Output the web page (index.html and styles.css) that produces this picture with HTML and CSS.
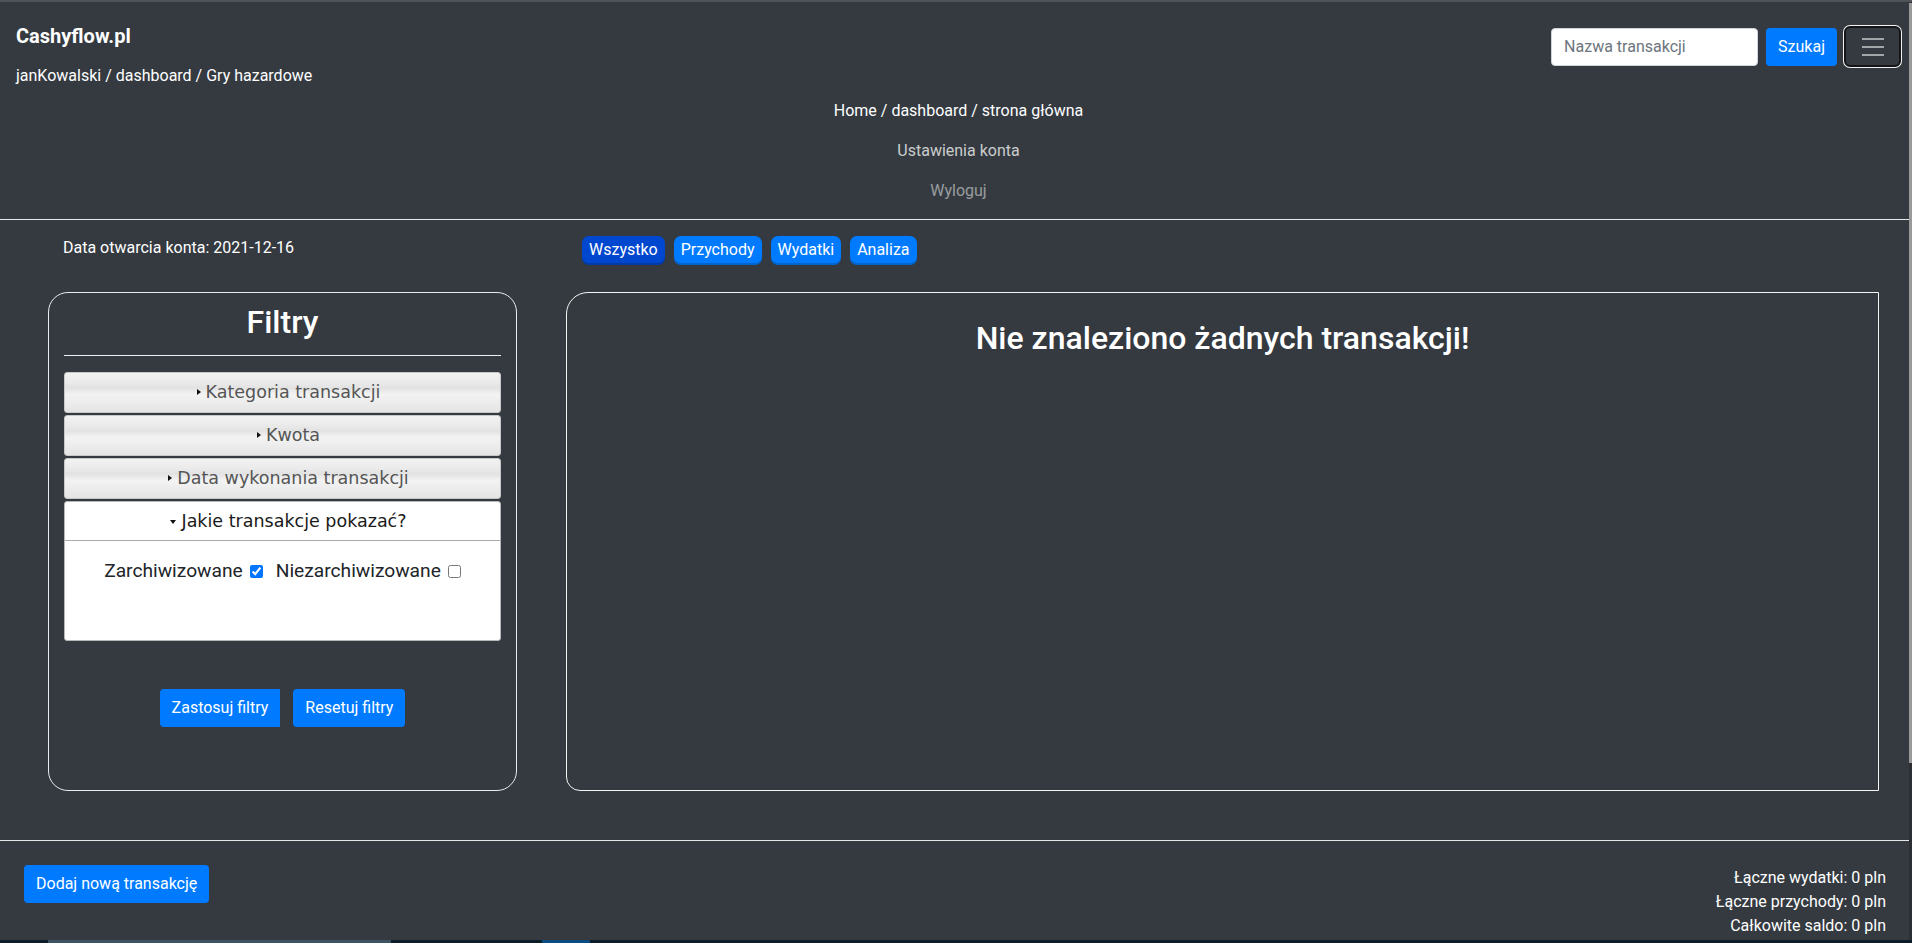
FILE: index.html
```html
<!DOCTYPE html>
<html lang="pl">
<head>
<meta charset="utf-8">
<title>Cashyflow.pl</title>
<link rel="stylesheet" href="styles.css">
</head>
<body>
<div class="topline"></div>
<header class="navbar">
  <div class="nav-top">
    <div class="brand-col">
      <a class="brand" href="#">Cashyflow.pl</a>
      <div class="crumb">janKowalski / dashboard / Gry hazardowe</div>
    </div>
    <div class="nav-right">
      <form class="search">
        <input class="search-input" type="text" placeholder="Nazwa transakcji">
        <button class="btn btn-primary" type="button">Szukaj</button>
      </form>
      <button class="toggler" type="button" aria-label="Menu">
        <svg width="30" height="30" viewBox="0 0 30 30"><path d="M4 7h22M4 15h22M4 23h22" stroke="rgba(255,255,255,0.55)" stroke-width="2" stroke-linecap="butt" fill="none"/></svg>
      </button>
    </div>
  </div>
  <ul class="nav-list">
    <li class="nav-item active">Home / dashboard / strona główna</li>
    <li class="nav-item hover">Ustawienia konta</li>
    <li class="nav-item">Wyloguj</li>
  </ul>
</header>
<div class="rule"></div>
<main class="content">
  <div class="info">Data otwarcia konta: 2021-12-16</div>
  <div class="tabs">
    <button class="tab tab-active" type="button">Wszystko</button>
    <button class="tab" type="button">Przychody</button>
    <button class="tab" type="button">Wydatki</button>
    <button class="tab" type="button">Analiza</button>
  </div>
  <section class="filters">
    <h2 class="filters-title">Filtry</h2>
    <div class="filters-rule"></div>
    <div class="acc">
      <div class="acc-item"><div class="acc-head"><span class="tri"></span>Kategoria transakcji</div></div>
      <div class="acc-item"><div class="acc-head"><span class="tri"></span>Kwota</div></div>
      <div class="acc-item"><div class="acc-head"><span class="tri"></span>Data wykonania transakcji</div></div>
      <div class="acc-item acc-open">
        <div class="acc-head"><span class="tri tri-down"></span>Jakie transakcje pokazać?</div>
        <div class="acc-body">
          <label class="check">Zarchiwizowane <input type="checkbox" checked></label>
          <label class="check">Niezarchiwizowane <input type="checkbox"></label>
        </div>
      </div>
    </div>
    <div class="filter-actions">
      <button class="btn btn-primary btn-apply" type="button">Zastosuj filtry</button>
      <button class="btn btn-primary" type="button">Resetuj filtry</button>
    </div>
  </section>
  <section class="results">
    <h2 class="results-title">Nie znaleziono żadnych transakcji!</h2>
  </section>
</main>
<div class="rule rule-bottom"></div>
<footer class="footer">
  <button class="btn btn-primary" type="button">Dodaj nową transakcję</button>
  <div class="totals">
    <div>Łączne wydatki: 0 pln</div>
    <div>Łączne przychody: 0 pln</div>
    <div>Całkowite saldo: 0 pln</div>
  </div>
</footer>
<div class="taskbar"><span class="tb-a"></span><span class="tb-b"></span></div>
<div class="scrollbar"><span class="thumb"></span></div>
</body>
</html>
```

FILE: styles.css
```css
* { box-sizing: border-box; }

html, body {
  margin: 0;
  padding: 0;
  background: #343a40;
}

body {
  font-family: Roboto, "Noto Sans", "Liberation Sans", sans-serif;
  font-size: 16px;
  line-height: 24px;
  color: #fff;
  min-height: 1000px;
}

.topline {
  height: 2px;
  background: #505459;
}

.navbar {
  padding: 19px 11px 8px 16px;
}

.nav-top {
  display: flex;
  justify-content: space-between;
  align-items: flex-start;
}

.brand-col {
  display: flex;
  flex-direction: column;
}

.brand {
  font-size: 20px;
  line-height: 30px;
  font-weight: 700;
  color: #fff;
  text-decoration: none;
}

.crumb {
  margin-top: 13px;
  line-height: 24px;
}

.nav-right {
  display: flex;
  align-items: center;
  margin-top: 5px;
  gap: 7px;
}

.search {
  display: flex;
  gap: 8px;
  margin: 0;
}

.search-input {
  width: 207px;
  height: 38px;
  padding: 6px 12px;
  border: 1px solid #ced4da;
  border-radius: 4px;
  font: inherit;
  font-size: 16px;
  color: #495057;
  background: #fff;
}

.search-input::placeholder {
  color: #6c757d;
}

.btn {
  font-family: inherit;
  font-size: 16px;
  line-height: 24px;
  padding: 7px 12px;
  border: 0;
  border-radius: 4px;
  cursor: pointer;
}

.btn-primary {
  background: #007bff;
  color: #fff;
}

.toggler {
  width: 57px;
  height: 41px;
  padding: 0;
  display: flex;
  align-items: center;
  justify-content: center;
  background: #343a40;
  border: 2px solid #141516;
  border-radius: 6px;
  box-shadow: 0 0 0 1px #f2f2f2;
}

.toggler svg {
  display: block;
}

.nav-list {
  list-style: none;
  margin: 3px 0 0;
  padding: 0;
  text-align: center;
}

.nav-item {
  padding: 8px 0;
  line-height: 24px;
  color: rgba(255, 255, 255, 0.5);
  margin-left: -11px;
  margin-right: -11px;
}

.nav-item.active {
  color: #fff;
}

.nav-item.hover {
  color: rgba(255, 255, 255, 0.75);
}

.rule {
  height: 1px;
  background: #e8e8e8;
}

.content {
  display: grid;
  grid-template-columns: 469px 1313px;
  column-gap: 49px;
  row-gap: 27px;
  padding-left: 48px;
  margin-top: 16px;
}

.info {
  padding-left: 15px;
  line-height: 24px;
}

.tabs {
  display: flex;
  gap: 9px;
  padding-left: 16px;
}

.tab {
  font-family: inherit;
  font-size: 16px;
  line-height: 24px;
  padding: 2px 7px 3px;
  border: 0;
  border-radius: 7px;
  background: #007bff;
  color: #fff;
  box-shadow: inset 0 -2px 0 rgba(0, 0, 0, 0.18);
}

.tab-active {
  background: #0047cf;
}

.filters {
  height: 499px;
  border: 1px solid #e9ecef;
  border-radius: 20px;
  padding: 10px 15px 0;
  display: flex;
  flex-direction: column;
}

.filters-title {
  margin: 0;
  font-size: 32px;
  line-height: 38px;
  font-weight: 500;
  text-align: center;
}

.filters-rule {
  height: 1px;
  background: #f0f0f0;
  margin: 14px 0 16px;
}

.acc {
  display: flex;
  flex-direction: column;
  gap: 2px;
}

.acc-item {
  border: 1px solid #c8c8c8;
  border-radius: 3px;
  background: linear-gradient(#f2f2f2 0%, #eaeaea 25%, #e2e2e2 38%, #f3f3f3 55%, #ebebeb 80%, #e4e4e4 100%);
}

.acc-head {
  height: 39px;
  line-height: 39px;
  padding-left: 12px;
  text-align: center;
  font-family: "DejaVu Sans", Verdana, sans-serif;
  font-size: 17.5px;
  color: #555;
}

.tri {
  display: inline-block;
  width: 0;
  height: 0;
  border-left: 4px solid #111;
  border-top: 3px solid transparent;
  border-bottom: 3px solid transparent;
  margin-right: 5px;
  vertical-align: 3px;
}

.tri-down {
  border-left: 3px solid transparent;
  border-right: 3px solid transparent;
  border-top: 4px solid #111;
  border-bottom: 0;
  margin-right: 5px;
}

.acc-open {
  background: #fff;
  border-color: #b8b8b8;
}

.acc-open .acc-head {
  height: 39px;
  line-height: 38px;
  color: #1a1a1a;
  border-bottom: 1px solid #aaa;
}

.acc-body {
  height: 99px;
  padding-top: 16px;
  display: flex;
  justify-content: center;
  align-items: flex-start;
  gap: 13px;
  color: #212529;
}

.check {
  font-size: 19.2px;
  line-height: 28px;
  display: flex;
  align-items: center;
}

.check input {
  width: 13px;
  height: 13px;
  margin: 0 0 0 7px;
  accent-color: #0075ff;
}

.filter-actions {
  display: flex;
  justify-content: center;
  gap: 13px;
  margin-top: 48px;
}

.btn-apply {
  border-radius: 4px 0 0 4px;
}

.results {
  height: 499px;
  border: 1px solid #f5f5f5;
  border-radius: 22px 0 0 14px;
  padding-top: 26px;
}

.results-title {
  margin: 0;
  font-size: 32px;
  line-height: 38px;
  font-weight: 500;
  text-align: center;
}

.rule-bottom {
  margin-top: 49px;
}

.footer {
  display: flex;
  justify-content: space-between;
  align-items: flex-start;
  padding: 24px 26px 40px 24px;
}

.totals {
  text-align: right;
  line-height: 24px;
  margin-top: 1px;
}

.taskbar {
  position: fixed;
  left: 0;
  right: 0;
  bottom: 0;
  height: 3px;
  background: #0c1d2a;
}

.tb-a {
  position: absolute;
  left: 48px;
  width: 343px;
  top: 0;
  bottom: 0;
  background: #3d5262;
}

.tb-b {
  position: absolute;
  left: 542px;
  width: 48px;
  top: 0;
  bottom: 0;
  background: #0d4b80;
}

.scrollbar {
  position: fixed;
  top: 2px;
  right: 0;
  bottom: 3px;
  width: 3px;
  background: #2b2f33;
}

.thumb {
  position: absolute;
  left: 0;
  right: 0;
  top: 1px;
  height: 760px;
  background: #9a9a9a;
}
```
